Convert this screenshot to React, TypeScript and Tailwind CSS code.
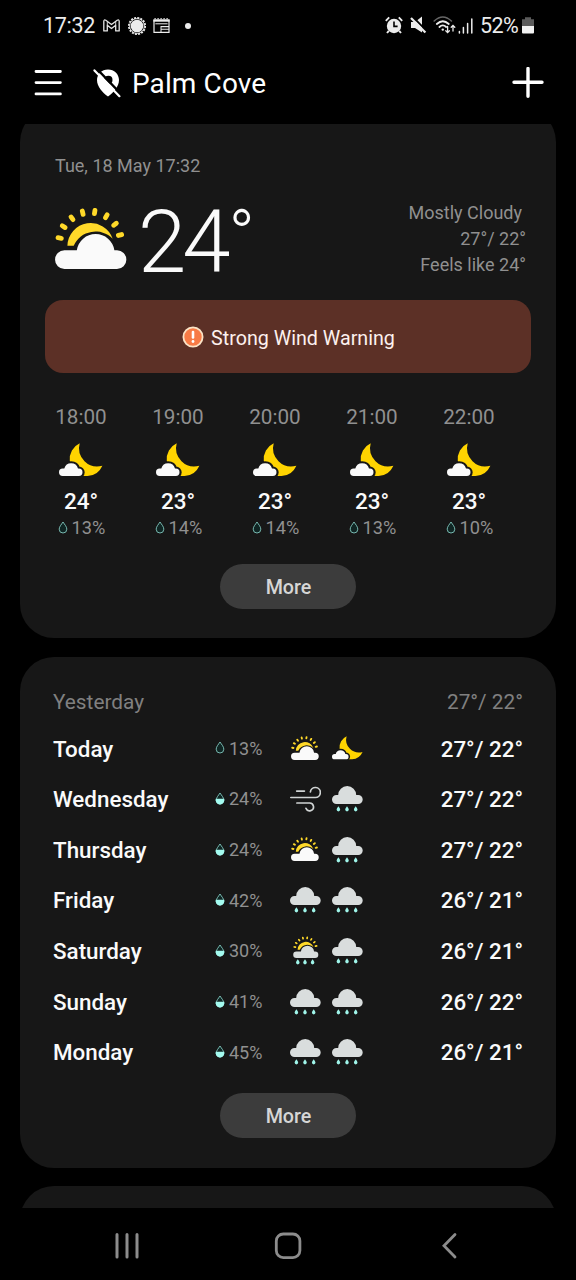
import React from "react";

const SUN_RAYS: [number, number][] = [
  [4.7, 30], [8.7, 18.7], [17, 10.3], [27.7, 4.7], [39.7, 4], [51.3, 8.3], [60, 16.3], [65, 27],
];

function SunCloudShapes({ cloud }: { cloud: string }) {
  return (
    <>
      {SUN_RAYS.map(([x, y]) => {
        const d = Math.hypot(x - 35, y - 35);
        const ux = ((x - 35) / d) * 1.7;
        const uy = ((y - 35) / d) * 1.7;
        return (
          <line key={x} x1={x - ux} y1={y - uy} x2={x + ux} y2={y + uy} stroke="#ffd929" strokeWidth="4.8" strokeLinecap="round" />
        );
      })}
      <path d="M12.4 37.7A23.3 23.3 0 0 1 57.7 30.7A24 24 0 0 0 18.7 37.7Z" fill="#ffd929" />
      <path d="M9.4 42.3H21.8A19 19 0 0 1 59.4 42.3H62A9.35 9.35 0 0 1 62 61H9.4A9.35 9.35 0 0 1 9.4 42.3Z" fill={cloud} />
    </>
  );
}

function SunCloud({ className }: { className: string }) {
  return (
    <svg viewBox="0 0 72 62" className={className}>
      <SunCloudShapes cloud="#fafafa" />
    </svg>
  );
}

function MoonCloud({ className }: { className: string }) {
  const cloud = "M3.7 25.6H5.3A7.1 7.1 0 0 1 19 25.6H19.8A3.7 3.7 0 0 1 19.8 33H3.7A3.7 3.7 0 0 1 3.7 25.6Z";
  return (
    <svg viewBox="0 0 44 34" className={className}>
      <path d="M20.7 0.3A17.5 17.5 0 0 0 10.8 18L20 33H28.5A17.3 17.3 0 0 0 43.4 22.7A18.3 18.3 0 0 1 20.7 0.3Z" fill="#ffd400" />
      <path d={cloud} fill="#171717" stroke="#171717" strokeWidth="4.4" />
      <path d={cloud} fill="#fafafa" />
    </svg>
  );
}

const DROP = "M0 -2.8C0.9 -1.5 1.8 -0.4 1.8 0.6A1.8 1.8 0 0 1 -1.8 0.6C-1.8 -0.4 -0.9 -1.5 0 -2.8Z";

function Rain() {
  return (
    <svg viewBox="0 0 31 26" className="h-[26px] w-[31px]">
      <path d="M4.5 9H6.2A9 9 0 0 1 24.2 9H26.2A4.5 4.5 0 0 1 26.2 18H4.5A4.5 4.5 0 0 1 4.5 9Z" fill="#d9dddd" />
      {[6.4, 15, 23.7].map((x) => (
        <path key={x} d={DROP} transform={`translate(${x} 23)`} fill="#9ff5ea" />
      ))}
    </svg>
  );
}

function SunRain() {
  return (
    <svg viewBox="0 0 31 29" className="h-[29px] w-[31px]">
      <g transform="translate(3.2 0.5) scale(0.352)">
        <SunCloudShapes cloud="#d9dddd" />
      </g>
      {[7.8, 15, 22.6].map((x) => (
        <path key={x} d={DROP} transform={`translate(${x} 26)`} fill="#9ff5ea" />
      ))}
    </svg>
  );
}

function Wind() {
  return (
    <svg viewBox="0 0 31 26" className="h-[26px] w-[31px]" fill="none" stroke="#d0d4d4" strokeWidth="1.7" strokeLinecap="round">
      <path d="M0.8 11.5H25.3A5 5 0 1 0 20.4 5.9" />
      <path d="M6.7 5.1H14.4" />
      <path d="M6.9 17H19.3A3.9 3.9 0 1 1 16 22.4" />
    </svg>
  );
}

function Drop({ half }: { half?: boolean }) {
  return (
    <svg viewBox="0 0 10 13" className="mb-px h-[13px] w-[10px]">
      <path d="M5 1C6.6 3.6 8.8 5.6 8.8 8.2A3.8 3.8 0 0 1 1.2 8.2C1.2 5.6 3.4 3.6 5 1Z" fill="#0f2523" stroke="#82c9c1" strokeWidth="0.9" />
      {half && <path d="M0.8 6.8H9.2C9.9 10 7.6 12.6 5 12.6S0.1 10 0.8 6.8Z" fill="#a4fbf0" />}
    </svg>
  );
}

function StatusBar() {
  return (
    <div className="flex h-[52px] items-center pl-[43px] pr-[42px] text-[21.5px] text-[#ececec]">
      <span className="w-[60px] tracking-[-0.3px]">17:32</span>
      <svg viewBox="0 0 17 13" className="mb-[2px] h-[13px] w-[17px]" fill="none" stroke="#e4e4e4" strokeWidth="1.3" strokeLinejoin="round">
        <path d="M0.8 11.9V2.2Q0.9 0.2 2.8 1.3L8.5 5.5L14.2 1.3Q16.1 0.2 16.2 2.2V11.9H12.7V6.2L8.5 9.5L4.3 6.2V11.9Z" />
        <path d="M4.3 6.2V2.6M12.7 6.2V2.6" strokeWidth="0.9" />
      </svg>
      <svg viewBox="0 0 20 20" className="mb-px ml-[7px] h-5 w-5">
        <circle cx="10" cy="10" r="8.2" fill="none" stroke="#ececec" strokeWidth="1.7" strokeDasharray="2 1.22" />
        <circle cx="10" cy="10" r="7.4" fill="none" stroke="#ececec" strokeWidth="0.9" />
        <circle cx="10" cy="10" r="6.3" fill="#ececec" />
      </svg>
      <svg viewBox="0 0 17 16" className="mb-px ml-[6px] h-4 w-[17px]" fill="none" stroke="#ececec">
        <path d="M1 2H16V14.4H1Z" strokeWidth="1.2" />
        <path d="M0.4 2.6H16.6" strokeWidth="2.2" />
        <path d="M1.5 0.7H16" strokeWidth="1.2" strokeDasharray="1.2 1.8" />
        <path d="M2.4 5.8H14.6" strokeWidth="1" />
        <path d="M8 8.6H16M8 11.2H16" strokeWidth="1.1" />
        <path d="M8 8V14" strokeWidth="1" />
      </svg>
      <span className="mb-px ml-[14.5px] size-[6px] rounded-full bg-[#ececec]" />
      <div className="ml-auto flex items-center">
        <svg viewBox="0 0 18 18" className="mb-[2px] h-[18px] w-[18px]">
          <circle cx="9" cy="10" r="7.2" fill="#ececec" />
          <path d="M0.8 4.8L4.2 1.4M17.2 4.8L13.8 1.4M3.8 14.8L2 17M14.2 14.8L16 17" stroke="#ececec" strokeWidth="1.9" />
          <path d="M9 5.5V10.4H12.6" fill="none" stroke="#000" strokeWidth="1.6" />
        </svg>
        <svg viewBox="0 0 17 18" className="mb-[2px] ml-[7px] h-[18px] w-[17px]">
          <path d="M1 6H5L12 0.4V16.5L5 12H1Z" fill="#ececec" />
          <path d="M2.5 0.6L17 15.4" stroke="#000" strokeWidth="2" />
          <path d="M1 2L15.4 16.6" stroke="#ececec" strokeWidth="2.2" />
        </svg>
        <svg viewBox="0 0 23 18" className="mb-[2px] ml-[6px] h-[18px] w-[23px]" fill="none" stroke="#ececec" strokeLinecap="round">
          <path d="M1.2 5Q9.8 -3 18.4 5" strokeWidth="1.6" stroke="#666" />
          <path d="M3.8 8Q9.8 2.4 15.8 8" strokeWidth="1.8" />
          <path d="M6.4 11Q9.8 7.8 13.2 11" strokeWidth="1.8" />
          <circle cx="9.8" cy="13.6" r="1.2" fill="#ececec" stroke="none" />
          <path d="M14.6 10.5V16.4M12.8 14.8L14.6 16.6L16.4 14.8M20 15V9.4M18.2 11.2L20 9.4L21.8 11.2" strokeWidth="1.3" />
        </svg>
        <svg viewBox="0 0 16 18" className="mb-px ml-[2px] h-[18px] w-4" stroke="#ececec" strokeWidth="1.5" strokeLinecap="round">
          <path d="M1.4 14.4V16M5.4 10.6V16M9.6 6.5V16M13.8 2V16" />
        </svg>
        <span className="ml-[6px] w-[40px] tracking-[-0.6px]">52%</span>
        <svg viewBox="0 0 12 18" className="mb-[2px] ml-[2px] h-[18px] w-3">
          <path d="M3 1.2H9V3.2H12V10H0V3.2H3Z" fill="#5b5b5b" />
          <path d="M0 10H12V16.5Q12 17.5 11 17.5H1Q0 17.5 0 16.5Z" fill="#f2f2f2" />
        </svg>
      </div>
    </div>
  );
}

function Header() {
  return (
    <div className="flex h-[72px] items-center pb-[10px] pl-[34px] pr-[32px] text-white">
      <svg viewBox="0 0 28 28" className="size-7" stroke="#fff" strokeWidth="2.8" strokeLinecap="round">
        <path d="M2 2.5H26.4M2 13.6H26.4M2 24.9H26.4" />
      </svg>
      <svg viewBox="0 0 28 30" className="ml-[31px] h-[30px] w-7">
        <path fillRule="evenodd" d="M15 1.4C21.2 1.4 26 6 26 12C26 18.6 20.5 24.4 15 28.6C9.5 24.4 4 18.6 4 12C4 6 8.8 1.4 15 1.4ZM15.4 7.8A4.1 4.1 0 0 0 15.4 16A4.1 4.1 0 0 0 15.4 7.8Z" fill="#fff" />
        <path d="M7 10L12 11L19 18L14 20Z" fill="#fff" />
        <path d="M3.5 0.5L28 26" stroke="#000" strokeWidth="2.4" />
        <path d="M1.5 2.4L26.4 28.2" stroke="#fff" strokeWidth="2.2" strokeLinecap="round" />
      </svg>
      <h1 className="ml-[11px] pt-[2px] text-[28px] tracking-[0.1px]">Palm Cove</h1>
      <svg viewBox="0 0 32 32" className="ml-auto size-8" stroke="#fff" strokeWidth="3.4" strokeLinecap="round">
        <path d="M2 15.3H30M16 1.5V29.3" />
      </svg>
    </div>
  );
}

function MoreButton() {
  return (
    <button className="h-[44.5px] w-[136px] rounded-full bg-[#3c3c3c] pl-px pt-[3px] text-[19.7px] font-medium text-[#d6d6d6]">
      More
    </button>
  );
}

const HOURS = [
  ["18:00", "24°", "13%"],
  ["19:00", "23°", "14%"],
  ["20:00", "23°", "14%"],
  ["21:00", "23°", "13%"],
  ["22:00", "23°", "10%"],
];

function CurrentCard() {
  return (
    <section className="-mt-4 flex h-[530px] shrink-0 flex-col rounded-[34px] bg-[#171717] pt-[46px]">
      <p className="pl-[35px] text-[18px] leading-6 text-[#909090]">Tue, 18 May 17:32</p>
      <div className="mt-[22px] flex h-[78px] pl-[35px] pr-[30px]">
        <SunCloud className="mt-[8px] h-[62px] w-[72px] shrink-0" />
        <div className="ml-[11px] flex items-start pt-px font-light text-[#fafafa]">
          <span className="text-[87px] leading-[82px] tracking-[-4px]">24</span>
          <span className="ml-[2px] text-[70px] leading-[71px]">°</span>
        </div>
        <div className="ml-auto text-right text-[18px] leading-[26px] text-[#909090]">
          <p className="pr-[4px]">Mostly Cloudy</p>
          <p>27°/ 22°</p>
          <p>Feels like 24°</p>
        </div>
      </div>
      <div className="mx-[25px] mt-[22px] flex h-[73px] items-center justify-center gap-[7px] rounded-[18px] bg-[#5c3026] pl-px pt-[5px] text-[19.7px] text-[#fdf1ee]">
        <svg viewBox="0 0 22 22" className="mb-[5px] size-[22px]">
          <circle cx="11" cy="11" r="9.6" fill="#f77a45" stroke="#fbe3c6" strokeWidth="1.8" />
          <path d="M11 6V11.5" stroke="#fff" strokeWidth="2.6" strokeLinecap="round" />
          <circle cx="11" cy="15.5" r="1.4" fill="#fff" />
        </svg>
        <span>Strong Wind Warning</span>
      </div>
      <div className="mt-[32px] flex pl-[12.5px]">
        {HOURS.map(([time, temp, chance]) => (
          <div key={time} className="flex w-[97px] flex-col items-center">
            <span className="text-[20.7px] leading-6 text-[#909090]">{time}</span>
            <MoonCloud className="mt-[14px] h-[34px] w-[44px]" />
            <span className="mt-[12px] text-[22.5px] font-medium leading-6 text-[#fafafa]">{temp}</span>
            <span className="mt-[3px] flex items-center gap-[4px] pl-px text-[18.2px] leading-6 text-[#909090]">
              <Drop />
              {chance}
            </span>
          </div>
        ))}
      </div>
      <div className="mt-[24px] flex justify-center">
        <MoreButton />
      </div>
    </section>
  );
}

type Row = { day: string; chance: string; half: boolean; icons: [React.ReactNode, React.ReactNode]; temps: string };

const smallSun = <SunCloud className="mb-px mr-px h-[24.5px] w-[28px]" />;
const DAYS: Row[] = [
  { day: "Today", chance: "13%", half: false, icons: [smallSun, <MoonCloud className="mb-px h-[24px] w-[31px]" />], temps: "27°/ 22°" },
  { day: "Wednesday", chance: "24%", half: true, icons: [<Wind />, <Rain />], temps: "27°/ 22°" },
  { day: "Thursday", chance: "24%", half: true, icons: [smallSun, <Rain />], temps: "27°/ 22°" },
  { day: "Friday", chance: "42%", half: true, icons: [<Rain />, <Rain />], temps: "26°/ 21°" },
  { day: "Saturday", chance: "30%", half: true, icons: [<SunRain />, <Rain />], temps: "26°/ 21°" },
  { day: "Sunday", chance: "41%", half: true, icons: [<Rain />, <Rain />], temps: "26°/ 22°" },
  { day: "Monday", chance: "45%", half: true, icons: [<Rain />, <Rain />], temps: "26°/ 21°" },
];

function DailyCard() {
  return (
    <section className="mt-[19px] h-[511px] shrink-0 rounded-[34px] bg-[#171717] pl-[33px] pr-[33px] pt-[34px]">
      <div className="flex h-6 items-center justify-between text-[20.8px] text-[#808080]">
        <span>Yesterday</span>
        <span>27°/ 22°</span>
      </div>
      <div className="mt-[8px]">
        {DAYS.map((row) => (
          <div key={row.day} className="flex h-[50.65px] items-center text-[22.4px] font-medium text-[#fafafa]">
            <span className="w-[162px] pt-[2px]">{row.day}</span>
            <span className="flex w-[74.6px] items-center gap-[4px] text-[18px] font-normal text-[#909090]">
              <Drop half={row.half} />
              {row.chance}
            </span>
            <span className="flex w-[31px] justify-center">{row.icons[0]}</span>
            <span className="ml-[11.4px] flex w-[31px] justify-center">{row.icons[1]}</span>
            <span className="ml-auto pt-[2px]">{row.temps}</span>
          </div>
        ))}
      </div>
      <div className="mt-[16px] flex justify-center">
        <MoreButton />
      </div>
    </section>
  );
}

function NavBar() {
  return (
    <div className="flex h-[72px] items-center justify-between pb-px pl-[112px] pr-[112px]">
      <svg viewBox="0 0 30 30" className="size-[30px]" stroke="#8c8c8c" strokeWidth="3" strokeLinecap="round">
        <path d="M5 5.5V28M15 5.5V28M25 5.5V28" />
      </svg>
      <svg viewBox="0 0 30 30" className="size-[30px]" fill="none" stroke="#8c8c8c" strokeWidth="2.8">
        <rect x="3.3" y="5" width="23.6" height="23.6" rx="7" />
      </svg>
      <svg viewBox="0 0 30 30" className="size-[30px]" fill="none" stroke="#8c8c8c" strokeWidth="2.8" strokeLinecap="round" strokeLinejoin="miter">
        <path d="M21 5.5L10 16.8L21 28" />
      </svg>
    </div>
  );
}

export default function App() {
  return (
    <main className="flex h-[1280px] w-[576px] flex-col overflow-hidden bg-black font-['Roboto',sans-serif]">
      <StatusBar />
      <Header />
      <div className="flex h-[1084px] flex-col overflow-hidden px-[20px]">
        <CurrentCard />
        <DailyCard />
        <section className="mt-[18px] h-[100px] shrink-0 rounded-[34px] bg-[#171717]" />
      </div>
      <NavBar />
    </main>
  );
}
